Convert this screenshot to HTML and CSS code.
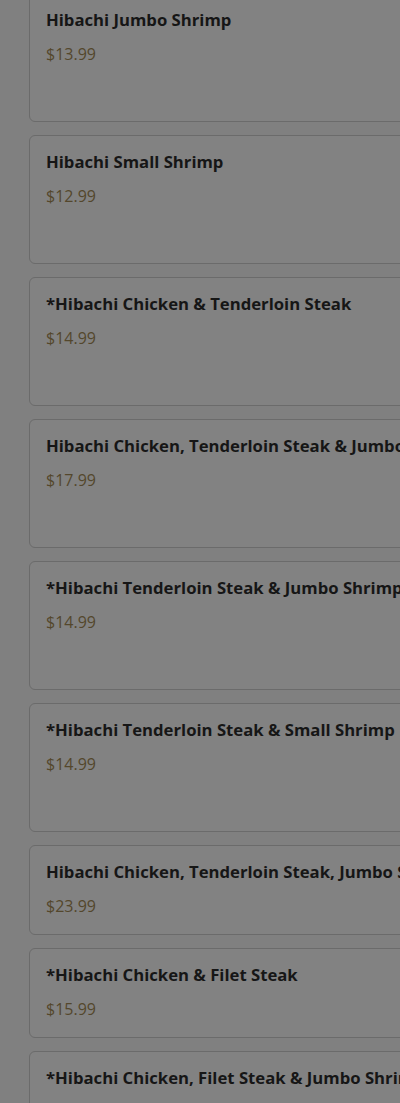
FILE: index.html
```html
<!DOCTYPE html>
<html>
<head>
<meta charset="utf-8">
<link rel="stylesheet" href="styles.css">
</head>
<body>
<div class="list">
  <div class="card tall"><div class="title">Hibachi Jumbo Shrimp</div><div class="price">$13.99</div></div>
  <div class="card tall"><div class="title">Hibachi Small Shrimp</div><div class="price">$12.99</div></div>
  <div class="card tall"><div class="title">*Hibachi Chicken &amp; Tenderloin Steak</div><div class="price">$14.99</div></div>
  <div class="card tall"><div class="title">Hibachi Chicken, Tenderloin Steak &amp; Jumbo Shrimp</div><div class="price">$17.99</div></div>
  <div class="card tall"><div class="title">*Hibachi Tenderloin Steak &amp; Jumbo Shrimp</div><div class="price">$14.99</div></div>
  <div class="card tall"><div class="title">*Hibachi Tenderloin Steak &amp; Small Shrimp</div><div class="price">$14.99</div></div>
  <div class="card short"><div class="title">Hibachi Chicken, Tenderloin Steak, Jumbo Shrimp</div><div class="price">$23.99</div></div>
  <div class="card short"><div class="title">*Hibachi Chicken &amp; Filet Steak</div><div class="price">$15.99</div></div>
  <div class="card short"><div class="title">*Hibachi Chicken, Filet Steak &amp; Jumbo Shrimp</div><div class="price">$19.99</div></div>
</div>
</body>
</html>
```
FILE: styles.css
```css
html, body {
  margin: 0;
  padding: 0;
  background: #808080;
  overflow: hidden;
  height: 1103px;
}
.list {
  display: flex;
  flex-direction: column;
  gap: 13px;
  padding-left: 29px;
  margin-top: -7px;
}
.card {
  box-sizing: border-box;
  width: 440px;
  flex: none;
  border: 1px solid #6b6b6b;
  border-radius: 6px;
  background: #828282;
  padding: 15px 17px 0 16px;
  font-family: "Open Sans", "Lato", sans-serif;
  white-space: nowrap;
  overflow: hidden;
}
.tall { height: 129px; }
.short { height: 90px; }
.title {
  font-size: 16.7px;
  line-height: 22px;
  font-weight: 700;
  color: #161616;
}
.price {
  margin-top: 13px;
  font-size: 16px;
  line-height: 20px;
  color: #54472c;
}
```
